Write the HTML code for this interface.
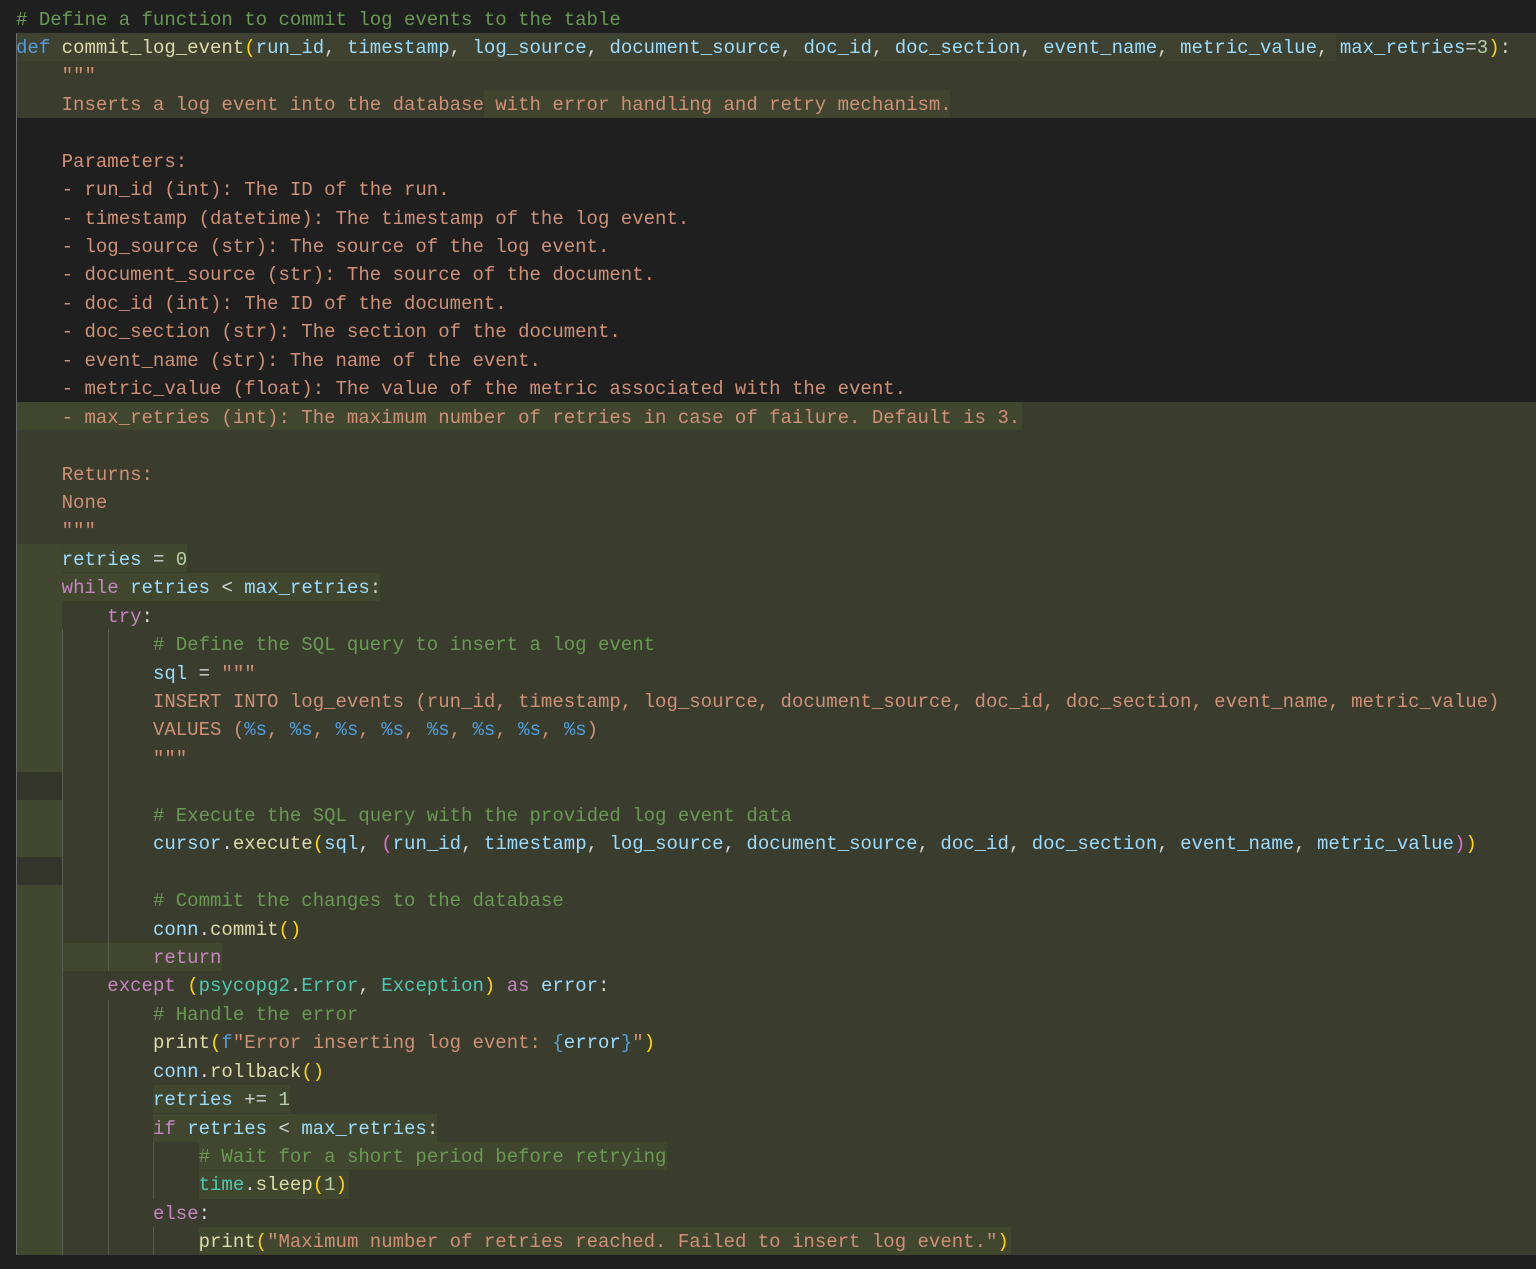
<!DOCTYPE html>
<html><head><meta charset="utf-8"><style>
body{margin:0;width:1536px;height:1269px;background:#1f1f1f;overflow:hidden;position:relative;font-family:"Liberation Mono",monospace;font-size:19.02px}
.bg{position:absolute}
.l{position:absolute;left:16px;white-space:pre;height:28.44px;line-height:28.44px;color:#d4d4d4;margin-top:1.5px}
.c{color:#6a9955}.k{color:#569cd6}.f{color:#dcdcaa}.p{color:#9cdcfe}.s{color:#ce9178}.ctl{color:#c586c0}.y{color:#ffd700}.pk{color:#da70d6}.t{color:#4ec9b0}.n{color:#b5cea8}.ps{color:#4f9fe0}
.g{position:absolute;width:1px;background:#5a5c50}
</style></head><body>
<div class="bg" style="left:16px;top:33px;width:1520px;height:85px;background:#3a3c2e"></div>
<div class="bg" style="left:16px;top:402px;width:1520px;height:853px;background:#3a3c2e"></div>
<div class="bg" style="left:16px;top:33px;width:1320px;height:28px;background:#3f4230"></div>
<div class="bg" style="left:484px;top:90px;width:466px;height:28px;background:#41452f"></div>
<div class="bg" style="left:16px;top:402px;width:1006px;height:28px;background:#41462f"></div>
<div class="bg" style="left:16px;top:544px;width:46px;height:711px;background:#42472f"></div>
<div class="bg" style="left:16px;top:772px;width:46px;height:28px;background:#33352b"></div>
<div class="bg" style="left:16px;top:857px;width:46px;height:28px;background:#33352b"></div>
<div class="bg" style="left:62px;top:544px;width:125px;height:28px;background:#41462f"></div>
<div class="bg" style="left:62px;top:573px;width:318px;height:28px;background:#41462f"></div>
<div class="bg" style="left:62px;top:943px;width:160px;height:28px;background:#41462f"></div>
<div class="bg" style="left:153px;top:1085px;width:137px;height:28px;background:#41462f"></div>
<div class="bg" style="left:153px;top:1114px;width:284px;height:28px;background:#41462f"></div>
<div class="bg" style="left:199px;top:1142px;width:468px;height:28px;background:#41462f"></div>
<div class="bg" style="left:199px;top:1171px;width:150px;height:28px;background:#41462f"></div>
<div class="bg" style="left:199px;top:1227px;width:812px;height:28px;background:#41462f"></div>
<div class="g" style="left:16px;top:33px;height:1222px;background:#6a6a6a"></div>
<div class="g" style="left:62px;top:629px;height:626px"></div>
<div class="g" style="left:108px;top:629px;height:342px"></div>
<div class="g" style="left:108px;top:1000px;height:255px"></div>
<div class="g" style="left:153px;top:1142px;height:57px"></div>
<div class="g" style="left:153px;top:1227px;height:28px"></div>

<div class="l" style="top:4px"><span class="c"># Define a function to commit log events to the table</span></div>
<div class="l" style="top:32.4px"><span class="k">def</span> <span class="f">commit_log_event</span><span class="y">(</span><span class="p">run_id</span>, <span class="p">timestamp</span>, <span class="p">log_source</span>, <span class="p">document_source</span>, <span class="p">doc_id</span>, <span class="p">doc_section</span>, <span class="p">event_name</span>, <span class="p">metric_value</span>, <span class="p">max_retries</span>=<span class="n">3</span><span class="y">)</span>:</div>
<div class="l s" style="top:60.9px">    """</div>
<div class="l s" style="top:89.3px">    Inserts a log event into the database with error handling and retry mechanism.</div>
<div class="l s" style="top:146.2px">    Parameters:</div>
<div class="l s" style="top:174.6px">    - run_id (int): The ID of the run.</div>
<div class="l s" style="top:203px">    - timestamp (datetime): The timestamp of the log event.</div>
<div class="l s" style="top:231.5px">    - log_source (str): The source of the log event.</div>
<div class="l s" style="top:259.9px">    - document_source (str): The source of the document.</div>
<div class="l s" style="top:288.4px">    - doc_id (int): The ID of the document.</div>
<div class="l s" style="top:316.8px">    - doc_section (str): The section of the document.</div>
<div class="l s" style="top:345.2px">    - event_name (str): The name of the event.</div>
<div class="l s" style="top:373.7px">    - metric_value (float): The value of the metric associated with the event.</div>
<div class="l s" style="top:402.1px">    - max_retries (int): The maximum number of retries in case of failure. Default is 3.</div>
<div class="l s" style="top:459px">    Returns:</div>
<div class="l s" style="top:487.4px">    None</div>
<div class="l s" style="top:515.9px">    """</div>
<div class="l" style="top:544.3px">    <span class="p">retries</span> = <span class="n">0</span></div>
<div class="l" style="top:572.7px">    <span class="ctl">while</span> <span class="p">retries</span> &lt; <span class="p">max_retries</span>:</div>
<div class="l" style="top:601.2px">        <span class="ctl">try</span>:</div>
<div class="l" style="top:629.6px">            <span class="c"># Define the SQL query to insert a log event</span></div>
<div class="l" style="top:658px">            <span class="p">sql</span> = <span class="s">"""</span></div>
<div class="l s" style="top:686.5px">            INSERT INTO log_events (run_id, timestamp, log_source, document_source, doc_id, doc_section, event_name, metric_value)</div>
<div class="l s" style="top:714.9px">            VALUES (<span class="ps">%s</span>, <span class="ps">%s</span>, <span class="ps">%s</span>, <span class="ps">%s</span>, <span class="ps">%s</span>, <span class="ps">%s</span>, <span class="ps">%s</span>, <span class="ps">%s</span>)</div>
<div class="l s" style="top:743.4px">            """</div>
<div class="l" style="top:800.2px">            <span class="c"># Execute the SQL query with the provided log event data</span></div>
<div class="l" style="top:828.7px">            <span class="p">cursor</span>.<span class="f">execute</span><span class="y">(</span><span class="p">sql</span>, <span class="pk">(</span><span class="p">run_id</span>, <span class="p">timestamp</span>, <span class="p">log_source</span>, <span class="p">document_source</span>, <span class="p">doc_id</span>, <span class="p">doc_section</span>, <span class="p">event_name</span>, <span class="p">metric_value</span><span class="pk">)</span><span class="y">)</span></div>
<div class="l" style="top:885.6px">            <span class="c"># Commit the changes to the database</span></div>
<div class="l" style="top:914px">            <span class="p">conn</span>.<span class="f">commit</span><span class="y">()</span></div>
<div class="l" style="top:942.4px">            <span class="ctl">return</span></div>
<div class="l" style="top:970.9px">        <span class="ctl">except</span> <span class="y">(</span><span class="t">psycopg2</span>.<span class="t">Error</span>, <span class="t">Exception</span><span class="y">)</span> <span class="ctl">as</span> <span class="p">error</span>:</div>
<div class="l" style="top:999.3px">            <span class="c"># Handle the error</span></div>
<div class="l" style="top:1027.7px">            <span class="f">print</span><span class="y">(</span><span class="k">f</span><span class="s">"Error inserting log event: </span><span class="k">{</span><span class="p">error</span><span class="k">}</span><span class="s">"</span><span class="y">)</span></div>
<div class="l" style="top:1056.2px">            <span class="p">conn</span>.<span class="f">rollback</span><span class="y">()</span></div>
<div class="l" style="top:1084.6px">            <span class="p">retries</span> += <span class="n">1</span></div>
<div class="l" style="top:1113px">            <span class="ctl">if</span> <span class="p">retries</span> &lt; <span class="p">max_retries</span>:</div>
<div class="l" style="top:1141.5px">                <span class="c"># Wait for a short period before retrying</span></div>
<div class="l" style="top:1169.9px">                <span class="t">time</span>.<span class="f">sleep</span><span class="y">(</span><span class="n">1</span><span class="y">)</span></div>
<div class="l" style="top:1198.4px">            <span class="ctl">else</span>:</div>
<div class="l" style="top:1226.8px">                <span class="f">print</span><span class="y">(</span><span class="s">"Maximum number of retries reached. Failed to insert log event."</span><span class="y">)</span></div>
</body></html>
